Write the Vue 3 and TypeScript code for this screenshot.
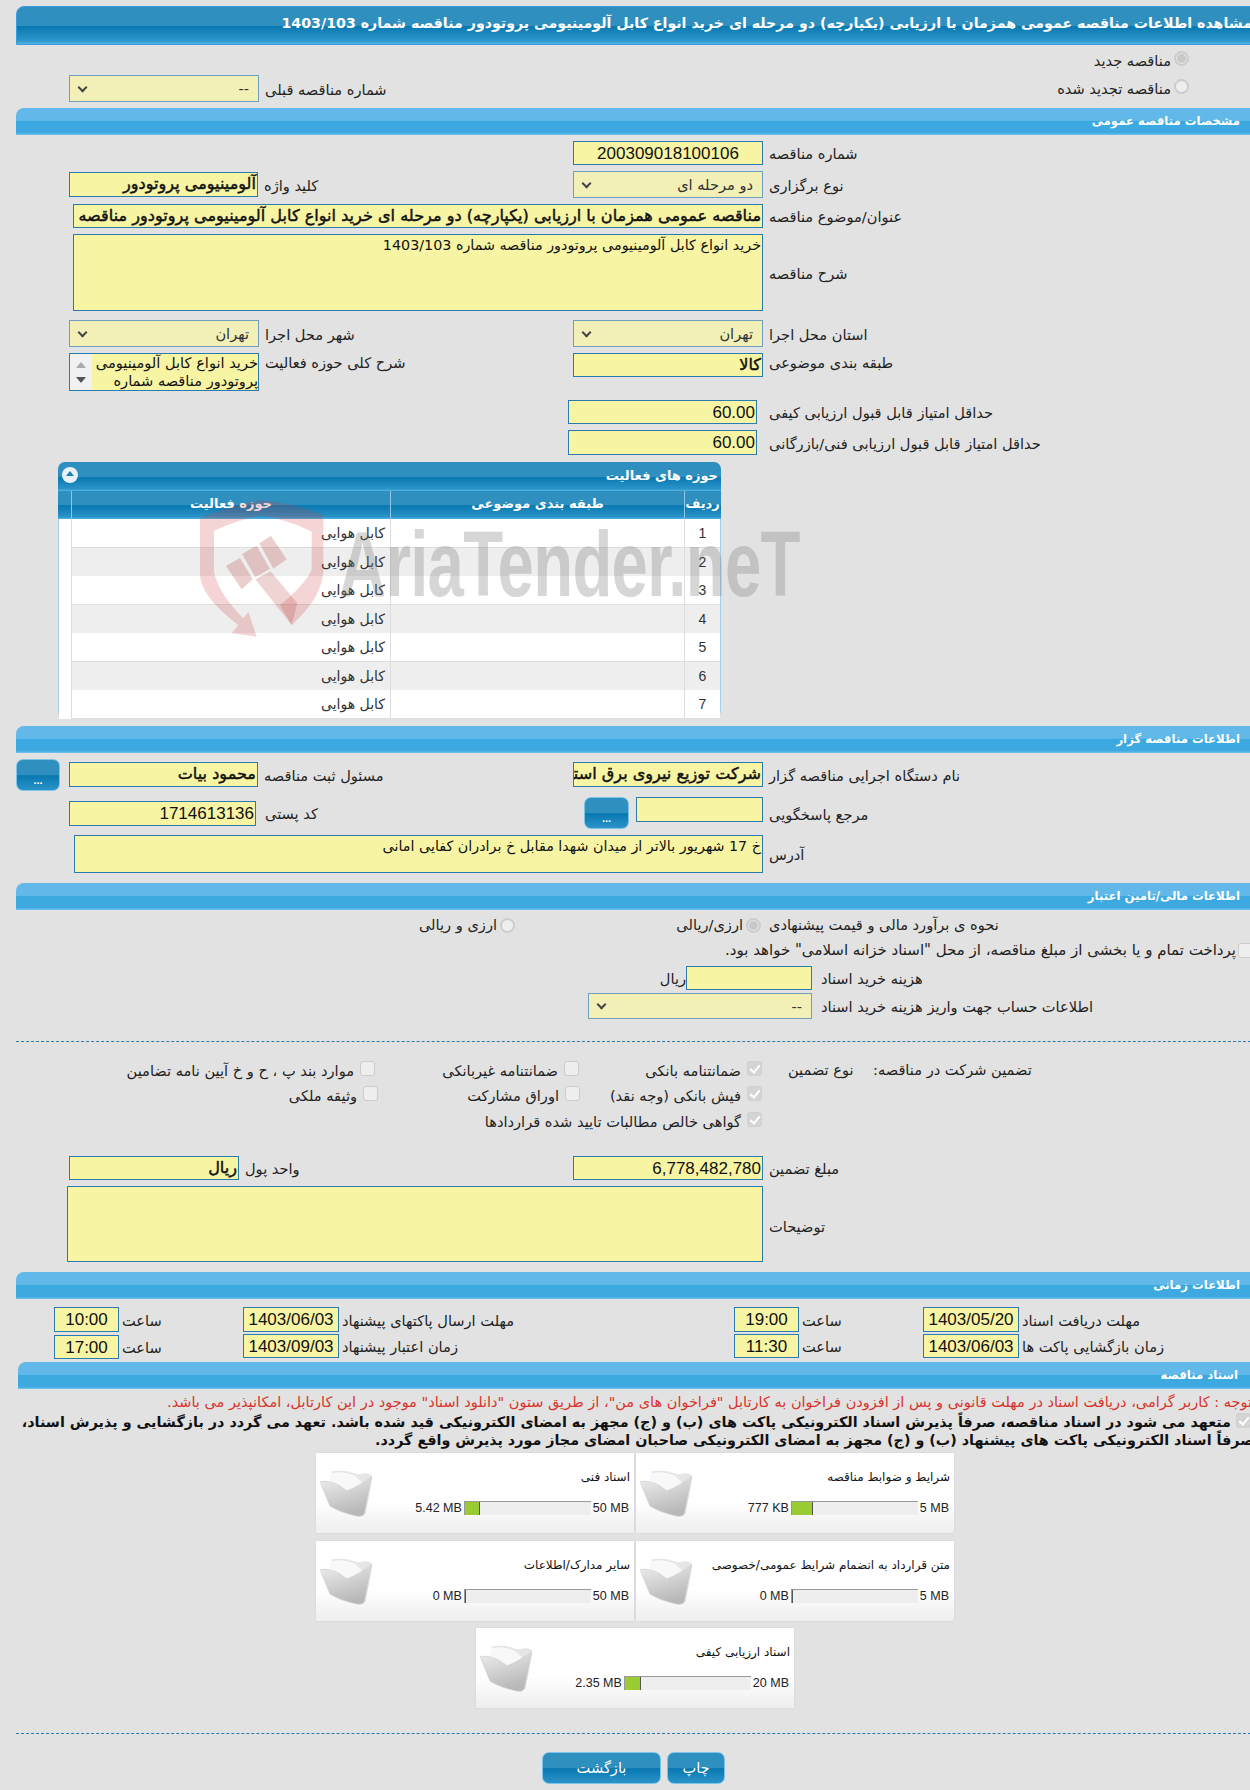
<script setup lang="ts">
interface Card { title: string; used: string; max: string; pct: number }
const rows: number[] = [1, 2, 3, 4, 5, 6, 7]
const cards: Card[][] = [
  [
    { title: 'اسناد فنی', used: '5.42 MB', max: '50 MB', pct: 12 },
    { title: 'شرایط و ضوابط مناقصه', used: '777 KB', max: '5 MB', pct: 17 },
  ],
  [
    { title: 'سایر مدارک/اطلاعات', used: '0 MB', max: '50 MB', pct: 0 },
    { title: 'متن قرارداد به انضمام شرایط عمومی/خصوصی', used: '0 MB', max: '5 MB', pct: 0 },
  ],
  [{ title: 'اسناد ارزیابی کیفی', used: '2.35 MB', max: '20 MB', pct: 13 }],
]
</script>

<template>
  <div class="page">
    <div class="head-main" dir="rtl"><h1>مشاهده اطلاعات مناقصه عمومی همزمان با ارزیابی (یکپارچه) دو مرحله ای خرید انواع کابل آلومینیومی پروتودور مناقصه شماره 1403/103</h1></div>

    <div class="prev-row">
      <div class="radio-line r1" dir="rtl"><i class="radio on"></i><span>مناقصه جدید</span></div>
      <div class="prev-second">
        <div class="field">
          <div class="sel w190 h27"><b class="caret"></b><span dir="rtl">--</span></div>
          <label dir="rtl">شماره مناقصه قبلی</label>
        </div>
        <div class="radio-line" dir="rtl"><i class="radio"></i><span>مناقصه تجدید شده</span></div>
      </div>
    </div>

    <div class="sec" dir="rtl">مشخصات مناقصه عمومی</div>

    <div class="two t6">
      <div></div>
      <div class="field"><div class="inp w190 h24 center num">200309018100106</div><label dir="rtl">شماره مناقصه</label></div>
    </div>
    <div class="two t6">
      <div class="field"><div class="inp w189 h25 bold" dir="rtl">آلومینیومی پروتودور</div><label dir="rtl">کلید واژه</label></div>
      <div class="field"><div class="sel w190 h27"><b class="caret"></b><span dir="rtl">دو مرحله ای</span></div><label dir="rtl">نوع برگزاری</label></div>
    </div>
    <div class="wide t6">
      <div class="inp w690 h24 bold" dir="rtl">مناقصه عمومی همزمان با ارزیابی (یکپارچه) دو مرحله ای خرید انواع کابل آلومینیومی پروتودور مناقصه</div>
      <label dir="rtl">عنوان/موضوع مناقصه</label>
    </div>
    <div class="wide t6">
      <div class="inp area w690 h77" dir="rtl">خرید انواع کابل آلومینیومی پروتودور مناقصه شماره 1403/103</div>
      <label dir="rtl">شرح مناقصه</label>
    </div>
    <div class="two t9">
      <div class="field"><div class="sel w190 h27"><b class="caret"></b><span dir="rtl">تهران</span></div><label dir="rtl">شهر محل اجرا</label></div>
      <div class="field"><div class="sel w190 h27"><b class="caret"></b><span dir="rtl">تهران</span></div><label dir="rtl">استان محل اجرا</label></div>
    </div>
    <div class="two t6 start">
      <div class="field top">
        <div class="list w190">
          <div class="scroll"><i class="up"></i><i class="down"></i></div>
          <div class="list-text" dir="rtl">خرید انواع کابل آلومینیومی پروتودور مناقصه شماره</div>
        </div>
        <label dir="rtl">شرح کلی حوزه فعالیت</label>
      </div>
      <div class="field top"><div class="inp w190 h24 bold" dir="rtl">کالا</div><label dir="rtl">طبقه بندی موضوعی</label></div>
    </div>
    <div class="score s1">
      <div class="inp w189 h24 end num" dir="ltr">60.00</div><label dir="rtl">حداقل امتیاز قابل قبول ارزیابی کیفی</label>
    </div>
    <div class="score s2">
      <div class="inp w189 h25 end num" dir="ltr">60.00</div><label dir="rtl">حداقل امتیاز قابل قبول ارزیابی فنی/بازرگانی</label>
    </div>

    <div class="panel">
      <div class="panel-title" dir="rtl"><span>حوزه های فعالیت</span><i class="toggle"></i></div>
      <div class="grid-row grid-head">
        <div></div>
        <div class="ch">حوزه فعالیت</div>
        <div class="ch">طبقه بندی موضوعی</div>
        <div class="ch">ردیف</div>
      </div>
      <div v-for="r in rows" :key="r" class="grid-row body" :class="{ odd: r % 2 === 0 }">
        <div class="gutter"></div>
        <div class="cell" dir="rtl">کابل هوایی</div>
        <div class="cell"></div>
        <div class="cell idx">{{ r }}</div>
      </div>
      <svg class="wm-shield" viewBox="0 0 990 480" width="330" height="160">
        <path d="M30 85 Q120 45 215 30 Q320 42 400 75 L400 250 Q390 330 305 405 L270 345 Q340 290 365 240 L365 125 Q300 92 215 76 Q140 90 72 122 L72 245 Q85 310 160 385 L175 365 L200 440 L125 430 L145 405 Q30 320 30 250 Z" fill="#cf3a3a" fill-opacity=".22"/>
        <path d="M108 228 L150 204 L188 268 L155 298 Z" fill="#b83a3a" fill-opacity=".25"/>
        <path d="M156 192 L200 167 L240 236 L196 262 Z" fill="#b83a3a" fill-opacity=".25"/>
        <path d="M208 160 L243 138 L290 208 L250 236 Z" fill="#b83a3a" fill-opacity=".25"/>
        <path d="M196 268 L242 244 L322 340 L305 405 Z" fill="#b83a3a" fill-opacity=".22"/>
      </svg>
      <div class="wm-text">AriaTender.neT</div>
    </div>

    <div class="sec s-org" dir="rtl">اطلاعات مناقصه گزار</div>
    <div class="org-row">
      <button class="dots">...</button>
      <div class="two-inner">
        <div class="field"><div class="inp w189 h25 bold pre" dir="rtl">محمود  بیات</div><label dir="rtl">مسئول ثبت مناقصه</label></div>
        <div class="field"><div class="inp w190 h25 bold" dir="rtl">شرکت توزیع نیروی برق استان</div><label dir="rtl">نام دستگاه اجرایی مناقصه گزار</label></div>
      </div>
    </div>
    <div class="two t6 h-32">
      <div class="field"><div class="inp w187 h25 end num" dir="ltr">1714613136</div><label class="ml2" dir="rtl">کد پستی</label></div>
      <div class="ref">
        <button class="dots small">...</button>
        <div class="inp w127 h25"></div>
        <label dir="rtl">مرجع پاسخگویی</label>
      </div>
    </div>
    <div class="wide addr">
      <div class="inp area w689 h38" dir="rtl">خ 17 شهریور بالاتر از میدان شهدا مقابل خ برادران کفایی امانی</div>
      <label dir="rtl">آدرس</label>
    </div>

    <div class="sec s-fin" dir="rtl">اطلاعات مالی/تامین اعتبار</div>
    <div class="fin-radio">
      <div class="radio-line dim" dir="rtl"><i class="radio"></i><span>ارزی و ریالی</span></div>
      <div class="radio-line dim rr" dir="rtl"><i class="radio on"></i><span>ارزی/ریالی</span></div>
      <label dir="rtl">نحوه ی برآورد مالی و قیمت پیشنهادی</label>
    </div>
    <div class="treasury" dir="rtl"><i class="check"></i><span>پرداخت تمام و یا بخشی از مبلغ مناقصه، از محل "اسناد خزانه اسلامی" خواهد بود.</span></div>
    <div class="cost">
      <span class="unit" dir="rtl">ریال</span>
      <div class="inp w126 h24"></div>
      <label dir="rtl">هزینه خرید اسناد</label>
    </div>
    <div class="account">
      <div class="sel w224 h26"><b class="caret"></b><span dir="rtl">--</span></div>
      <label dir="rtl">اطلاعات حساب جهت واریز هزینه خرید اسناد</label>
    </div>
    <div class="dash d1"></div>

    <div class="guar">
      <div class="guar-line g1">
        <div class="ck c3" dir="rtl"><i class="check"></i><span>موارد بند پ ، ح و خ آیین نامه تضامین</span></div>
        <div class="ck c2" dir="rtl"><i class="check"></i><span>ضمانتنامه غیربانکی</span></div>
        <div class="ck c1" dir="rtl"><i class="check on"></i><span>ضمانتنامه بانکی</span></div>
        <label class="type" dir="rtl">نوع تضمین</label>
        <label class="part" dir="rtl">تضمین شرکت در مناقصه:</label>
      </div>
      <div class="guar-line g2">
        <div class="ck c3 b" dir="rtl"><i class="check"></i><span>وثیقه ملکی</span></div>
        <div class="ck c2 b" dir="rtl"><i class="check"></i><span>اوراق مشارکت</span></div>
        <div class="ck c1" dir="rtl"><i class="check on"></i><span>فیش بانکی (وجه نقد)</span></div>
      </div>
      <div class="guar-line g3">
        <div class="ck c1" dir="rtl"><i class="check on"></i><span>گواهی خالص مطالبات تایید شده قراردادها</span></div>
      </div>
    </div>

    <div class="two amount">
      <div class="field"><div class="inp w170 h24 bold" dir="rtl">ریال</div><label dir="rtl">واحد پول</label></div>
      <div class="field"><div class="inp w190 h24 end num" dir="ltr">6,778,482,780</div><label dir="rtl">مبلغ تضمین</label></div>
    </div>
    <div class="wide note">
      <div class="inp w696 h76"></div>
      <label dir="rtl">توضیحات</label>
    </div>

    <div class="sec s-time" dir="rtl">اطلاعات زمانی</div>
    <div class="times t1">
      <div class="tm"><div class="inp w65 h25 center num">10:00</div><label dir="rtl">ساعت</label></div>
      <div class="dt x1"><div class="inp w96 h25 center num">1403/06/03</div><label dir="rtl">مهلت ارسال پاکتهای پیشنهاد</label></div>
      <div class="tm x2"><div class="inp w65 h25 center num">19:00</div><label dir="rtl">ساعت</label></div>
      <div class="dt x3"><div class="inp w96 h25 center num">1403/05/20</div><label dir="rtl">مهلت دریافت اسناد</label></div>
    </div>
    <div class="times t2">
      <div class="tm"><div class="inp w65 h24 center num">17:00</div><label dir="rtl">ساعت</label></div>
      <div class="dt x1"><div class="inp w96 h24 center num">1403/09/03</div><label dir="rtl">زمان اعتبار پیشنهاد</label></div>
      <div class="tm x2"><div class="inp w65 h24 center num">11:30</div><label dir="rtl">ساعت</label></div>
      <div class="dt x3"><div class="inp w96 h24 center num">1403/06/03</div><label dir="rtl">زمان بازگشایی پاکت ها</label></div>
    </div>

    <div class="sec s-doc" dir="rtl">اسناد مناقصه</div>
    <div class="warn" dir="rtl">توجه : کاربر گرامی، دریافت اسناد در مهلت قانونی و پس از افزودن فراخوان به کارتابل "فراخوان های من"، از طریق ستون "دانلود اسناد" موجود در این کارتابل، امکانپذیر می باشد.</div>
    <div class="pledge" dir="rtl">
      <i class="check on"></i>
      <div class="l1">متعهد می شود در اسناد مناقصه، صرفاً پذیرش اسناد الکترونیکی پاکت های (ب) و (ج) مجهز به امضای الکترونیکی قید شده باشد. تعهد می گردد در بازگشایی و پذیرش اسناد،</div>
      <div class="l2">صرفاً اسناد الکترونیکی پاکت های پیشنهاد (ب) و (ج) مجهز به امضای الکترونیکی صاحبان امضای مجاز مورد پذیرش واقع گردد.</div>
    </div>

    <div class="cards">
      <div v-for="(line, i) in cards" :key="i" class="card-line" :class="{ single: line.length === 1 }">
        <div v-for="c in line" :key="c.title" class="card">
          <svg class="folder" viewBox="0 0 155 140" width="52" height="47">
            <defs>
              <linearGradient id="fg" x1="0" y1="0" x2=".4" y2="1"><stop offset="0" stop-color="#efefef"/><stop offset="1" stop-color="#b8b8b8"/></linearGradient>
            </defs>
            <path d="M35 6 Q75 -2 108 14 L120 14 Q142 6 155 18 L135 130 L100 100 Z" fill="#e6e6e6" stroke="#dcdcdc" stroke-width="2"/>
            <path d="M35 8 Q75 2 105 18 L128 40 L80 62 Q50 46 28 34 Z" fill="#f8f8f8"/>
            <path d="M0 34 Q40 28 80 62 Q112 52 155 18 L132 130 Q126 142 105 136 Q60 126 30 108 Z" fill="url(#fg)" stroke="#d2d2d2" stroke-width="2"/>
          </svg>
          <div class="card-title" dir="rtl">{{ c.title }}</div>
          <div class="meter">
            <span class="val">{{ c.used }}</span>
            <div class="track"><div class="fill" :style="{ width: c.pct + '%' }"></div></div>
            <span class="val">{{ c.max }}</span>
          </div>
        </div>
      </div>
    </div>

    <div class="dash d2"></div>
    <div class="actions">
      <button class="btn back">بازگشت</button>
      <button class="btn print">چاپ</button>
    </div>
  </div>
</template>

<style>
html, body { margin: 0; background: #e2e2e2; }
</style>

<style scoped>
.page {
  width: 1250px; height: 1790px; overflow: hidden; position: relative;
  background: #e2e2e2; color: #111;
  font-family: "DejaVu Sans", sans-serif; font-size: 14.6px;
  padding: 6px 0 0 16px; box-sizing: border-box;
}
label { white-space: nowrap; font-size: 14.6px; line-height: 16px; color: #222; padding-top: 2px; }
.head-main {
  height: 39px; width: 1260px; box-sizing: border-box; border-radius: 8px 0 0 0; border: 1px solid #3b9be0;
  background: linear-gradient(#2f8fbe 0, #2f8fbe 50%, #0878b0 52%, #2f97cc 92%, #55b5e5 100%);
  overflow: hidden; position: relative;
}
.head-main h1 {
  margin: 0; color: #fff; font-size: 14.2px; font-weight: bold; line-height: 33px;
  white-space: nowrap; position: absolute; right: 23px;
}
.prev-row { height: 63px; width: 1173px; position: relative; }
.radio-line { display: flex; align-items: center; gap: 3px; white-space: nowrap; color: #222; }
.r1 { position: absolute; right: 0; top: 7px; }
.prev-second { position: absolute; left: 53px; right: 0; top: 30px; display: flex; justify-content: space-between; align-items: center; }
.radio { width: 15px; height: 15px; border: 2px solid #ccc; border-radius: 50%; background: #eee; box-sizing: border-box; flex: none; margin-top: -5px; }
.radio.on { background: #c8c8c8; box-shadow: inset 0 0 0 1px #e8e8e8; }
.sec {
  height: 27px; width: 1240px; box-sizing: border-box; padding-right: 16px;
  background: linear-gradient(#62b9e9 0, #62b9e9 46%, #3aa9e0 50%, #3fa9e0 92%, #76c6ee 100%);
  border-radius: 8px 0 0 0; color: #fff; font-weight: bold; font-size: 11.7px; line-height: 27px; white-space: nowrap;
}
.two { display: grid; grid-template-columns: 504px 1fr; margin-left: 53px; align-items: center; }
.two.start { align-items: start; }
.two-inner { display: grid; grid-template-columns: 504px 1fr; margin-left: 9px; }
.wide { display: flex; align-items: center; gap: 6px; margin-left: 57px; }
.field { display: flex; align-items: center; gap: 6px; }
.field.top { align-items: flex-start; }
.t6 { margin-top: 6px; } .t9 { margin-top: 9px; }
.inp, .sel, .list { box-sizing: border-box; flex: none; }
.inp {
  background: #f7f5a3; border: 1px solid #2a7bb0; font-size: 14.3px; line-height: 22px; padding: 0 1px; white-space: nowrap; overflow: hidden; color: #111;
}
.sel {
  background: #f2f0b6; border: 1px solid #6f9fbf; display: flex; justify-content: space-between; align-items: center; padding: 0 9px 0 7px; font-size: 14.6px; color: #333;
}
.caret { width: 7px; height: 7px; border: solid #444; border-width: 0 2.5px 2.5px 0; box-sizing: border-box; transform: rotate(45deg); margin: -3px 0 0 2px; }
.w65 { width: 65px; } .w96 { width: 96px; } .w126 { width: 126px; } .w127 { width: 127px; } .w170 { width: 170px; } .w187 { width: 187px; } .w189 { width: 189px; } .w190 { width: 190px; } .w224 { width: 224px; } .w689 { width: 689px; } .w690 { width: 690px; } .w696 { width: 696px; }
.h24 { height: 24px; } .h25 { height: 25px; } .h26 { height: 26px; } .h27 { height: 27px; } .h38 { height: 38px; } .h76 { height: 76px; } .h77 { height: 77px; }
.center { text-align: center; } .end { text-align: right; }
.num { font-family: "Liberation Sans", sans-serif; font-size: 17px; line-height: 24px; }
.bold { font-size: 16.1px; -webkit-text-stroke: .45px #111; }
.pre { white-space: pre; }
.area { white-space: normal; font-size: 14.3px; line-height: 20px; }
.list { height: 38px; display: flex; background: #f7f5a3; border: 1px solid #2a7bb0; overflow: hidden; }
.scroll { width: 22px; background: #f1f1f1; flex: none; position: relative; }
.up, .down { position: absolute; left: 6px; width: 0; height: 0; border: 5px solid transparent; }
.up { top: 8px; border-bottom: 6px solid #aaa; border-top: 0; }
.down { top: 23px; border-top: 6px solid #555; border-bottom: 0; }
.list-text { font-size: 14.6px; line-height: 18px; flex: 1; }
.score { display: flex; align-items: center; gap: 12px; margin-left: 552px; }
.s1 { margin-top: 9px; } .s2 { margin-top: 6px; }

.panel { width: 663px; margin: 7px 0 0 42px; height: 257px; border-radius: 8px; background: #fff; border: 1px solid #a8cfe8; box-sizing: border-box; position: relative; }
.panel-title { height: 29px; background: linear-gradient(#2f8fbe 0, #2f8fbe 50%, #0878b0 52%, #2a93c8 92%, #55b5e5 100%); color: #fff; font-weight: bold; font-size: 13px; line-height: 27px; display: flex; justify-content: space-between; padding: 0 3px 0 4px; border-radius: 7px 7px 0 0; margin: -1px -1px 0; }
.toggle { width: 16px; height: 16px; border-radius: 50%; background: #e8f1f7; margin-top: 5px; position: relative; }
.toggle::after { content: ""; position: absolute; left: 4px; top: 4px; border: 4px solid transparent; border-top: 0; border-bottom: 5px solid #1b7fb4; }
.grid-row { display: grid; grid-template-columns: 12px 319px 294px 1fr; }
.grid-head { height: 28px; background: linear-gradient(#2f8fbe 0, #2f8fbe 50%, #0878b0 52%, #2a93c8 92%, #55b5e5 100%); margin: 0 -1px; padding: 0 1px; color: #fff; font-weight: bold; }
.ch { text-align: center; border-left: 1px solid #8cc6e6; line-height: 26px; font-size: 13px; }
.body { height: 28.5px; box-sizing: border-box; }
.gutter { background: #fff; }
.cell { background: #fff; border-left: 1px solid #ddd; border-bottom: 1px solid #ddd; box-sizing: border-box; line-height: 28px; padding: 0 5px; font-size: 14px; color: #333; text-align: right; }
.body.odd .cell { background: #eee; }
.idx { text-align: center; font-family: "Liberation Sans", sans-serif; font-size: 14px; }
.wm-shield { position: absolute; left: 131px; top: 27px; pointer-events: none; }
.wm-text {
  position: absolute; left: 280px; top: 55px; font-family: "Liberation Sans", sans-serif; font-weight: bold; font-size: 92px; line-height: 92px;
  color: rgba(120,120,120,.3); white-space: nowrap; transform: scaleX(.71); transform-origin: 0 0; pointer-events: none; letter-spacing: -1px;
}

.s-org { margin-top: 7px; }
.org-row { margin-top: 9px; display: flex; align-items: flex-start; }
.org-row .dots { margin-top: -3px; }
.dots { width: 44px; height: 32px; border-radius: 7px; border: 1px solid #7cc4ea; color: #fff; font-weight: bold; font-size: 11px; background: linear-gradient(#2f8fbe 0, #2f8fbe 50%, #0878b0 52%, #2a93c8 100%); flex: none; padding: 10px 0 0; }
.dots.small { width: 45px; }
.h-32 { height: 32px; }
.ref { display: flex; align-items: flex-start; margin-left: 11px; }
.ref .inp { margin: 0 6px 0 7px; }
.ref label { margin-top: 8px; }
.ml2 { margin-left: 3px; }
.addr { margin-left: 58px; margin-top: 6px; }
.s-fin { margin-top: 10px; }
.fin-radio { display: flex; align-items: center; height: 24px; margin: 2px 0 0 406px; }
.fin-radio .radio { margin-top: 2px; }
.dim { justify-content: flex-start; width: 93px; flex: none; }
.rr { width: 84px; margin-left: 162px; }
.fin-radio label { margin-left: 8px; }
.treasury { display: flex; align-items: center; gap: 2px; width: 1237px; height: 18px; margin-top: 5px; white-space: nowrap; color: #222; font-size: 15px; }
.check { width: 15px; height: 15px; display: block; border: 1px solid #ccc; border-radius: 3px; background: #eee; box-sizing: border-box; flex: none; position: relative; }
.check.on { background: #d4d4d4; border-color: #d0d0d0; }
.check.on::after { content: ""; position: absolute; left: 4px; top: 1px; width: 4px; height: 8px; border: solid #fff; border-width: 0 2px 2px 0; transform: rotate(40deg); }
.cost { display: flex; align-items: center; margin: 7px 0 0 646px; }
.cost .unit { color: #222; width: 24px; text-align: right; }
.cost label { margin-left: 9px; }
.account { display: flex; align-items: center; margin: 3px 0 0 572px; gap: 9px; }
.dash { width: 1240px; border-top: 1px dashed #2a7bb0; }
.d1 { margin-top: 22px; }
.guar { margin-top: 16px; }
.guar-line { position: relative; width: 1240px; }
.g1 { height: 24px; } .g2 { height: 26px; } .g3 { height: 26px; }
.ck { position: absolute; top: 0; bottom: 0; display: flex; align-items: center; gap: 6px; white-space: nowrap; color: #222; }
.ck .check { margin-top: -4px; }
.c1 { right: 494px; }
.c2 { right: 677px; }
.c3 { right: 881px; }
.c2.b { right: 676px; } .c3.b { right: 878px; }
.type { position: absolute; left: 772px; top: 2px; }
.part { position: absolute; left: 857px; top: 2px; }
.amount { margin-top: 22px; }
.note { margin-top: 6px; margin-left: 51px; }
.note label { padding-top: 6px; }
.s-time { margin-top: 10px; }
.times { display: flex; position: relative; height: 25px; }
.t1 { margin-top: 8px; } .t2 { margin-top: 2px; }
.tm, .dt { display: flex; align-items: center; gap: 3px; }
.tm { margin-left: 38px; }
.dt.x1 { position: absolute; left: 227px; }
.tm.x2 { position: absolute; left: 718px; margin: 0; }
.dt.x3 { position: absolute; left: 907px; }
.s-doc { margin: 3px 0 0 2px; width: 1238px; padding-right: 18px; }
.warn { color: #d8342c; width: 1236px; white-space: nowrap; line-height: 18px; margin-top: 4px; font-size: 14.5px; }
.pledge { font-weight: bold; width: 1238px; white-space: nowrap; line-height: 18px; margin-top: 2px; color: #111; position: relative; }
.pledge .check { position: absolute; right: 3px; top: 0; }
.l1 { font-size: 14.35px; padding-right: 23px; }
.l2 { font-size: 14.3px; }
.cards { margin: 4px 0 0 300px; }
.card-line { display: flex; gap: 2px; height: 87.5px; }
.card-line.single { margin-left: 160px; }
.card {
  width: 318px; height: 80px; box-sizing: border-box; background: linear-gradient(#fff 0, #fff 60%, #eee 100%);
  box-shadow: 0 0 2px #d0d0d0; position: relative; flex: none;
}
.folder { position: absolute; left: 4px; top: 17px; }
.card-title { font-size: 12px; padding: 16px 4px 0 0; line-height: 16px; color: #111; white-space: nowrap; }
.meter { position: absolute; right: 5px; top: 48px; display: flex; align-items: center; gap: 2px; font-family: "Liberation Sans", sans-serif; }
.val { white-space: nowrap; color: #222; font-size: 12.5px; }
.track { width: 127px; height: 14px; background: #eee; border-top: 1px solid #999; border-left: 1px solid #999; box-sizing: border-box; }
.fill { height: 100%; background: #9c3; border-right: 1px solid #555; box-sizing: border-box; }
.d2 { margin-top: 17px; }
.actions { display: flex; gap: 6px; margin: 18px 0 0 526px; }
.btn { height: 32px; border-radius: 7px; border: 1px solid #7cc4ea; color: #fff; font-family: "DejaVu Sans", sans-serif; font-size: 14.6px; background: linear-gradient(#2f8fbe 0, #2f8fbe 50%, #0878b0 52%, #2a93c8 100%); padding: 0; }
.back { width: 119px; } .print { width: 58px; }
</style>
